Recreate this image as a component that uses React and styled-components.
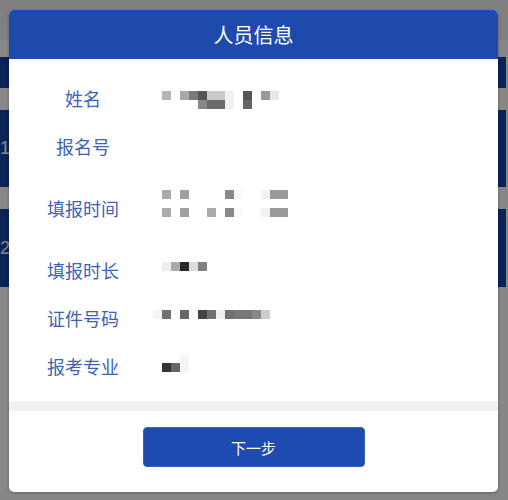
import React from 'react';
import styled, { createGlobalStyle } from 'styled-components';

const GlobalStyle = createGlobalStyle`
  html, body { margin: 0; padding: 0; }
  body {
    width: 508px;
    height: 500px;
    overflow: hidden;
    background: #fff;
    font-family: "Noto Sans CJK SC", "Noto Sans", sans-serif;
  }
`;

const Screen = styled.div`
  position: relative;
  width: 508px;
  height: 500px;
  overflow: hidden;
`;

const BackPage = styled.div`
  display: flex;
  flex-direction: column;
  height: 100%;
  background: #fff;
`;

const TopBar = styled.div`
  flex-shrink: 0;
  height: 40px;
  background: #f2f2f2;
  border-bottom: 1px solid #fff;
`;

const List = styled.div`
  display: flex;
  flex-direction: column;
  gap: 22px;
  padding-top: 16px;
  width: 506px;
`;

const Card = styled.div`
  height: ${(p) => p.$h}px;
  background: #1742a6;
  color: #fff;
  display: flex;
  align-items: center;
  font: 18px "Liberation Sans", sans-serif;
`;

const Overlay = styled.div`
  position: absolute;
  inset: 0;
  background: rgba(0, 0, 0, 0.47);
`;

const Modal = styled.div`
  position: absolute;
  left: 9px;
  top: 10px;
  width: 489px;
  background: #fff;
  border-radius: 5px;
  overflow: hidden;
  box-shadow: 0 1px 3px rgba(0, 0, 0, 0.3);
  display: flex;
  flex-direction: column;
`;

const Header = styled.div`
  height: 49px;
  background: #1e4aae;
  color: #fff;
  font-size: 20px;
  display: flex;
  align-items: center;
  justify-content: center;
`;

const Body = styled.div`
  padding: 15px 0 11px;
  display: flex;
  flex-direction: column;
`;

const Row = styled.div`
  display: grid;
  grid-template-columns: 148px 1fr;
  align-items: center;
  min-height: ${(p) => (p.$tall ? 76 : 48)}px;
`;

const Label = styled.div`
  text-align: center;
  color: #3b64b4;
  font-size: 18px;
  line-height: 24px;
`;

const Value = styled.div`
  display: flex;
  padding-left: 5px;
`;

const Mosaic = styled.div`
  display: grid;
  grid-template-columns: repeat(${(p) => p.$cols}, 9px);
  grid-auto-rows: 9px;
  margin-top: ${(p) => p.$nudge || 0}px;
  margin-left: ${(p) => p.$shift || 0}px;
`;

const Cell = styled.span`
  background: ${(p) => p.$c || 'transparent'};
`;

const Band = styled.div`
  height: 10px;
  background: #f0f0f0;
`;

const Footer = styled.div`
  display: flex;
  justify-content: center;
  padding: 16px 0 25px;
`;

const Button = styled.button`
  width: 222px;
  height: 40px;
  background: #1e4bb0;
  border: 1px solid #3563c6;
  border-radius: 4px;
  color: #fff;
  font-family: "Noto Sans CJK SC", "Noto Sans", sans-serif;
  font-size: 15px;
  padding: 0;
`;

const _ = null;

const rows = [
  {
    label: '姓名',
    nudge: 4,
    cells: [
      ['#b4b4b4', _, '#a8a8a8', '#7a7a7a', '#555', '#c8c8c8', '#c8c8c8', '#f0f0f0', _, '#555', _, '#999', '#e8e8e8'],
      [_, _, _, _, '#888', '#6a6a6a', '#6a6a6a', '#f0f0f0', _, '#666', _, _, _],
    ],
  },
  { label: '报名号' },
  {
    label: '填报时间',
    tall: true,
    nudge: -9,
    cells: [
      ['#aaa', _, '#a0a0a0', _, _, _, _, '#888', '#f8f8f8', _, _, '#f2f2f2', '#999', '#999'],
      [_, _, _, _, _, _, _, _, _, _, _, _, _, _],
      ['#aaa', _, '#a0a0a0', _, _, '#aaa', _, '#888', '#fafafa', _, _, '#f2f2f2', '#999', '#999'],
    ],
  },
  {
    label: '填报时长',
    nudge: -7,
    cells: [['#eee', '#aaa', '#2a2a2a', '#ddd', '#808080']],
  },
  {
    label: '证件号码',
    nudge: -7,
    shift: -9,
    cells: [['#f4f4f4', '#707070', _, '#666', _, '#444', '#707070', '#eee', '#707070', '#777', '#777', '#888', '#ccc']],
  },
  {
    label: '报考专业',
    nudge: -6,
    cells: [
      [_, _, '#f6f6f6'],
      ['#333', '#666', '#f5f5f5'],
    ],
  },
];

function Pixelated({ cells, nudge, shift }) {
  const cols = Math.max(...cells.map((r) => r.length));
  return (
    <Mosaic $cols={cols} $nudge={nudge} $shift={shift}>
      {cells.flatMap((r, i) =>
        Array.from({ length: cols }, (_v, j) => <Cell key={`${i}-${j}`} $c={r[j]} />)
      )}
    </Mosaic>
  );
}

export default function App() {
  return (
    <>
      <GlobalStyle />
      <Screen>
        <BackPage>
          <TopBar />
          <List>
            <Card $h={31} />
            <Card $h={77}>1</Card>
            <Card $h={78}>2</Card>
          </List>
        </BackPage>
        <Overlay />
        <Modal>
          <Header>人员信息</Header>
          <Body>
            {rows.map((r) => (
              <Row key={r.label} $tall={r.tall}>
                <Label>{r.label}</Label>
                <Value>
                  {r.cells && <Pixelated cells={r.cells} nudge={r.nudge} shift={r.shift} />}
                </Value>
              </Row>
            ))}
          </Body>
          <Band />
          <Footer>
            <Button>下一步</Button>
          </Footer>
        </Modal>
      </Screen>
    </>
  );
}
